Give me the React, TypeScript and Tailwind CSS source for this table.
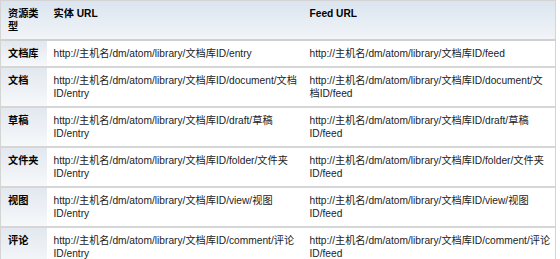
const rows: [string, string, string][] = [
  ['文档库', 'http://主机名/dm/atom/library/文档库ID/entry', 'http://主机名/dm/atom/library/文档库ID/feed'],
  ['文档', 'http://主机名/dm/atom/library/文档库ID/document/文档ID/entry', 'http://主机名/dm/atom/library/文档库ID/document/文档ID/feed'],
  ['草稿', 'http://主机名/dm/atom/library/文档库ID/draft/草稿ID/entry', 'http://主机名/dm/atom/library/文档库ID/draft/草稿ID/feed'],
  ['文件夹', 'http://主机名/dm/atom/library/文档库ID/folder/文件夹ID/entry', 'http://主机名/dm/atom/library/文档库ID/folder/文件夹ID/feed'],
  ['视图', 'http://主机名/dm/atom/library/文档库ID/view/视图ID/entry', 'http://主机名/dm/atom/library/文档库ID/view/视图ID/feed'],
  ['评论', 'http://主机名/dm/atom/library/文档库ID/comment/评论ID/entry', 'http://主机名/dm/atom/library/文档库ID/comment/评论ID/feed'],
];

export default function App() {
  return (
    <div className="w-[560px] h-[259px] bg-white" style={{ fontFamily: '"Liberation Sans", "Noto Sans CJK SC", sans-serif' }}>
      <table className="w-[556px] border-collapse border border-[#d4d4d4] text-[10.2px] leading-[13px] text-[#222] table-fixed">
        <colgroup>
          <col className="w-[46px]" />
          <col className="w-[256px]" />
          <col />
        </colgroup>
        <thead>
          <tr className="h-[38px] bg-gradient-to-b from-[#dbe5ef] to-[#f1f4f8] border-b-2 border-[#d0d0d0]">
            <th className="pl-[7px] pr-[2px] py-[6px] text-left align-top font-bold text-black">资源类型</th>
            <th className="pl-[7px] pr-[1px] py-[6px] text-left align-top font-bold text-black">实体 URL</th>
            <th className="pl-[7px] pr-[3.5px] py-[6px] text-left align-top font-bold text-black">Feed URL</th>
          </tr>
        </thead>
        <tbody>
          {rows.map(([type, entry, feed], i) => (
            <tr key={type} className={`${i === 0 ? 'h-[27px]' : 'h-[38px]'} border-b-2 border-[#d6d6d6]`}>
              <td className="pl-[7px] pr-[2px] py-[6px] align-top font-bold text-black bg-gradient-to-b from-[#e2e8ef] to-[#f6f8fa]">{type}</td>
              <td className="pl-[7px] pr-[1px] py-[6px] align-top">{entry}</td>
              <td className="pl-[7px] pr-[3.5px] py-[6px] align-top">{feed}</td>
            </tr>
          ))}
        </tbody>
      </table>
    </div>
  );
}
